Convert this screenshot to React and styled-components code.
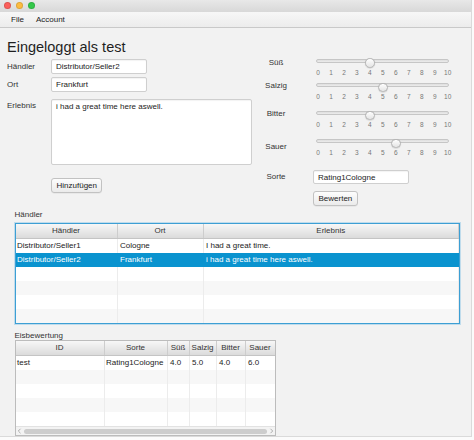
import React from 'react';
import styled, { createGlobalStyle } from 'styled-components';

const GlobalStyle = createGlobalStyle`
  html, body {
    margin: 0;
    padding: 0;
    background: #fbfbfb;
  }
  body {
    font-family: "Liberation Sans", Arial, sans-serif;
    color: #333;
  }
  * {
    box-sizing: border-box;
  }
`;

const Window = styled.div`
  width: 472px;
  height: 437px;
  background: #f2f2f2;
  border-right: 1px solid #dadada;
  border-bottom: 1px solid #dadada;
  display: flex;
  flex-direction: column;
  overflow: hidden;
`;

const TitleBar = styled.div`
  height: 12px;
  flex: none;
  display: flex;
  gap: 5px;
  padding: 1.5px 0 0 4px;
  background: linear-gradient(#e8e8e8, #d8d8d8);
`;

const Light = styled.span`
  width: 7px;
  height: 7px;
  border-radius: 50%;
  background: ${(p) => p.$color};
  border: 0.5px solid rgba(0, 0, 0, 0.12);
`;

const MenuBar = styled.div`
  height: 16px;
  flex: none;
  display: flex;
  align-items: center;
  padding-left: 5px;
  background: linear-gradient(#f7f7f7, #ececec);
  border-bottom: 1px solid #c9c9c9;
`;

const MenuItem = styled.span`
  padding: 0 6px;
  font-size: 8px;
  color: #222;
`;

const TopSection = styled.div`
  display: flex;
`;

const FormColumn = styled.div`
  width: 256px;
  padding-left: 7px;
`;

const Heading = styled.h1`
  margin: 10px 0 0;
  font-size: 14.5px;
  line-height: 18px;
  font-weight: 400;
  color: #1f1f1f;
`;

const FormRow = styled.div`
  display: grid;
  grid-template-columns: 44px auto;
  align-items: start;
  margin-top: ${(p) => p.$gap}px;
`;

const Label = styled.span`
  font-size: 8px;
  line-height: ${(p) => (p.$top ? '9px' : '15px')};
  padding-top: ${(p) => (p.$top ? '2px' : '0')};
  color: #333;
`;

const TextField = styled.input`
  width: ${(p) => p.$width || 96}px;
  height: ${(p) => p.$height || 15}px;
  margin: 0;
  padding: 0 4px;
  border: 1px solid #cfcfcf;
  border-radius: 2px;
  background: #fff;
  box-shadow: inset 0 1px 1px rgba(0, 0, 0, 0.05);
  font-family: inherit;
  font-size: 8px;
  color: #222;
  outline: none;
`;

const TextArea = styled.textarea`
  width: 201px;
  height: 66px;
  margin: 0;
  padding: 1.5px 4px;
  border: 1px solid #cfcfcf;
  border-radius: 2px;
  background: #fff;
  box-shadow: inset 0 1px 1px rgba(0, 0, 0, 0.05);
  font-family: inherit;
  font-size: 8px;
  line-height: 10px;
  color: #222;
  resize: none;
  outline: none;
  display: block;
`;

const Button = styled.button`
  height: ${(p) => p.$height || 15}px;
  margin: 0;
  padding: 0 4.5px;
  border: 1px solid #c2c2c2;
  border-radius: 3px;
  background: linear-gradient(#fdfdfd, #ebebeb);
  box-shadow: 0 0.5px 0.5px rgba(0, 0, 0, 0.08);
  font-family: inherit;
  font-size: 8px;
  color: #222;
  grid-column: 2;
  justify-self: start;
`;

const RatingColumn = styled.div`
  padding-top: 28.2px;
`;

const RatingRow = styled.div`
  display: grid;
  grid-template-columns: 40px 140px;
  column-gap: 17px;
  align-items: start;
  margin-top: ${(p) => p.$gap || 0}px;
`;

const RatingLabel = styled.span`
  text-align: center;
  font-size: 8px;
  line-height: ${(p) => p.$line || 9}px;
  margin-top: ${(p) => p.$shift || 0}px;
  color: #333;
`;

const Slider = styled.div`
  height: 18px;
`;

const TrackArea = styled.div`
  position: relative;
  height: 9px;
`;

const Track = styled.div`
  margin: 2.5px 0 0 3px;
  width: 133px;
  height: 4px;
  border-radius: 2px;
  background: linear-gradient(#dedede, #ececec);
  border: 1px solid #c6c6c6;
`;

const Thumb = styled.div`
  position: absolute;
  top: 0;
  width: 9.5px;
  height: 9.5px;
  margin-top: -0.25px;
  border-radius: 50%;
  background: linear-gradient(#fefefe, #e4e4e4);
  border: 1px solid #b3b3b3;
  box-shadow: 0 0.5px 1px rgba(0, 0, 0, 0.15);
`;

const Ticks = styled.div`
  display: flex;
  justify-content: space-between;
  margin: 1px 0 0 1px;
  width: 137.7px;
  height: 8px;
`;

const Tick = styled.span`
  width: 8px;
  text-align: center;
  font-size: 6.5px;
  line-height: 8px;
  color: #777;
`;

const Section = styled.div`
  padding-left: 14.5px;
`;

const SectionLabel = styled.div`
  font-size: 8px;
  line-height: 8px;
  color: #333;
  margin-top: ${(p) => p.$gap}px;
  margin-bottom: ${(p) => p.$after}px;
`;

const Table = styled.div`
  width: ${(p) => p.$width}px;
  height: ${(p) => p.$height}px;
  background: #fff;
  border: 1px solid ${(p) => (p.$focused ? '#3d9fd4' : '#bcbcbc')};
  box-shadow: ${(p) => (p.$focused ? '0 0 0 1px rgba(100, 180, 225, 0.35)' : 'none')};
  display: flex;
  flex-direction: column;
  overflow: hidden;
`;

const HeaderRow = styled.div`
  display: grid;
  grid-template-columns: ${(p) => p.$cols};
  height: 15px;
  flex: none;
  background: linear-gradient(#f7f7f7, #dbdbdb);
  border-bottom: 1px solid #c4c4c4;
`;

const HeaderCell = styled.div`
  display: flex;
  align-items: center;
  justify-content: center;
  border-right: 1px solid #cdcdcd;
  font-size: 8px;
  color: #333;
  white-space: nowrap;
  overflow: hidden;
`;

const BodyRow = styled.div`
  display: grid;
  grid-template-columns: ${(p) => p.$cols};
  height: ${(p) => p.$height}px;
  flex: none;
  background: ${(p) => (p.$selected ? '#0a93cf' : p.$odd ? '#f7f7f7' : '#fff')};
  color: ${(p) => (p.$selected ? '#fff' : '#222')};
`;

const Cell = styled.div`
  display: flex;
  align-items: center;
  padding-left: ${(p) => p.$pad}px;
  border-right: 1px solid ${(p) => (p.$selected ? 'transparent' : '#ececec')};
  font-size: 8px;
  white-space: nowrap;
  overflow: hidden;
`;

const ScrollBar = styled.div`
  margin-top: auto;
  height: 10px;
  flex: none;
  display: flex;
  align-items: center;
  gap: 2px;
  padding: 0 1px;
  background: #f3f3f3;
  border-top: 1px solid #e2e2e2;
`;

const ScrollThumb = styled.div`
  flex: 1;
  height: 5px;
  border-radius: 3px;
  background: #cdcdcd;
`;

const Arrow = ({ dir }) => (
  <svg width="5" height="6" viewBox="0 0 5 6">
    <polyline
      points={dir === 'left' ? '3.5,0.8 1.3,3 3.5,5.2' : '1.5,0.8 3.7,3 1.5,5.2'}
      fill="none"
      stroke="#9a9a9a"
      strokeWidth="0.8"
    />
  </svg>
);

const sliders = [
  { label: 'Süß', value: 4, gap: 0, shift: 2 },
  { label: 'Salzig', value: 5, gap: 6.5, shift: 0.3 },
  { label: 'Bitter', value: 4, gap: 10, shift: 0 },
  { label: 'Sauer', value: 6, gap: 9.7, shift: 5.6 },
];

const handlerCols = '102px 86px 1fr';
const handlerRows = [
  ['Distributor/Seller1', 'Cologne', 'I had a great time.'],
  ['Distributor/Seller2', 'Frankfurt', 'i had a great time here aswell.'],
  null,
  null,
  null,
  null,
];

const ratingCols = '89px 63px 22px 27px 29px 30px';
const ratingRows = [['test', 'Rating1Cologne', '4.0', '5.0', '4.0', '6.0'], null, null, null, null];

const RatingSlider = ({ value }) => (
  <Slider>
    <TrackArea>
      <Track />
      <Thumb style={{ left: 5 + value * 12.97 - 4.75 }} />
    </TrackArea>
    <Ticks>
      {Array.from({ length: 11 }, (_, i) => (
        <Tick key={i}>{i}</Tick>
      ))}
    </Ticks>
  </Slider>
);

export default function App() {
  return (
    <>
      <GlobalStyle />
      <Window>
        <TitleBar>
          <Light $color="#fc605c" />
          <Light $color="#fdbc40" />
          <Light $color="#34c84a" />
        </TitleBar>
        <MenuBar>
          <MenuItem>File</MenuItem>
          <MenuItem>Account</MenuItem>
        </MenuBar>

        <TopSection>
          <FormColumn>
            <Heading>Eingeloggt als test</Heading>
            <FormRow $gap={3}>
              <Label>Händler</Label>
              <TextField defaultValue="Distributor/Seller2" />
            </FormRow>
            <FormRow $gap={3}>
              <Label>Ort</Label>
              <TextField defaultValue="Frankfurt" />
            </FormRow>
            <FormRow $gap={7}>
              <Label $top>Erlebnis</Label>
              <TextArea defaultValue="i had a great time here aswell." />
            </FormRow>
            <FormRow $gap={13}>
              <Button>Hinzufügen</Button>
            </FormRow>
          </FormColumn>

          <RatingColumn>
            {sliders.map((s) => (
              <RatingRow key={s.label} $gap={s.gap}>
                <RatingLabel $shift={s.shift}>{s.label}</RatingLabel>
                <RatingSlider value={s.value} />
              </RatingRow>
            ))}
            <RatingRow $gap={15.5}>
              <RatingLabel $line={14.5}>Sorte</RatingLabel>
              <TextField $height={14.5} defaultValue="Rating1Cologne" />
            </RatingRow>
            <RatingRow $gap={6.7}>
              <Button $height={14.5}>Bewerten</Button>
            </RatingRow>
          </RatingColumn>
        </TopSection>

        <Section>
          <SectionLabel $gap={5} $after={4}>Händler</SectionLabel>
          <Table $width={445.5} $height={101} $focused>
            <HeaderRow $cols={handlerCols}>
              <HeaderCell>Händler</HeaderCell>
              <HeaderCell>Ort</HeaderCell>
              <HeaderCell>Erlebnis</HeaderCell>
            </HeaderRow>
            {handlerRows.map((row, i) => {
              const selected = i === 1;
              return (
                <BodyRow key={i} $cols={handlerCols} $height={14.1} $selected={selected} $odd={i % 2 === 1}>
                  {[0, 1, 2].map((c) => (
                    <Cell key={c} $pad={c === 0 ? 1.5 : 2.5} $selected={selected}>
                      {row ? row[c] : ''}
                    </Cell>
                  ))}
                </BodyRow>
              );
            })}
          </Table>

          <SectionLabel $gap={8} $after={0}>Eisbewertung</SectionLabel>
          <Table $width={261} $height={96}>
            <HeaderRow $cols={ratingCols}>
              {['ID', 'Sorte', 'Süß', 'Salzig', 'Bitter', 'Sauer'].map((h) => (
                <HeaderCell key={h}>{h}</HeaderCell>
              ))}
            </HeaderRow>
            {ratingRows.map((row, i) => (
              <BodyRow key={i} $cols={ratingCols} $height={14} $odd={i % 2 === 1}>
                {[0, 1, 2, 3, 4, 5].map((c) => (
                  <Cell key={c} $pad={c < 2 ? 1.5 : 2.5}>
                    {row ? row[c] : ''}
                  </Cell>
                ))}
              </BodyRow>
            ))}
            <ScrollBar>
              <Arrow dir="left" />
              <ScrollThumb />
              <Arrow dir="right" />
            </ScrollBar>
          </Table>
        </Section>
      </Window>
    </>
  );
}
